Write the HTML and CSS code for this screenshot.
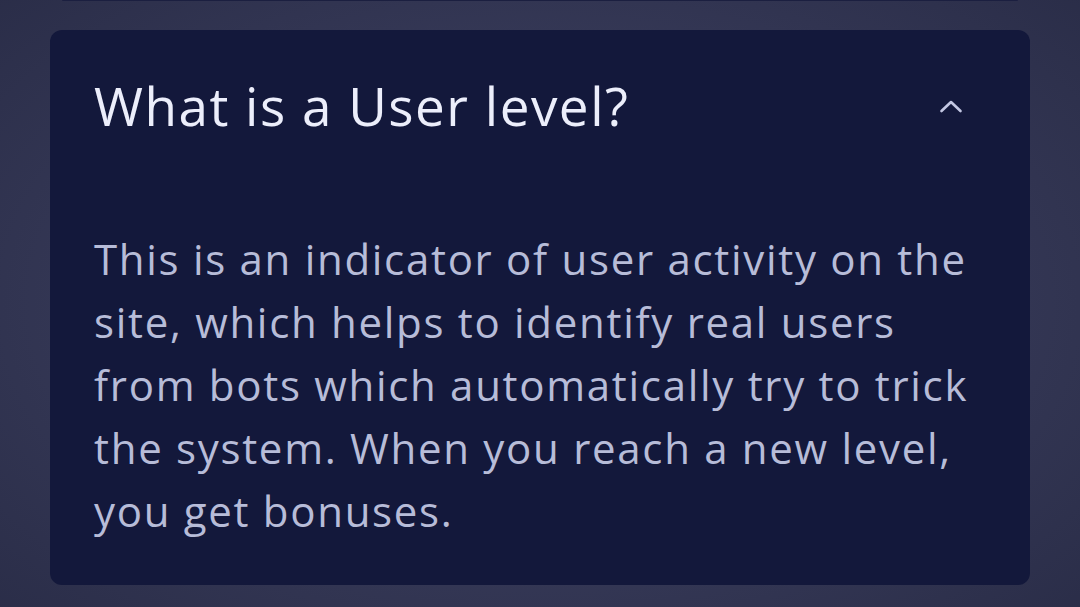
FILE: index.html
```html
<!DOCTYPE html>
<html lang="en">
<head>
<meta charset="utf-8">
<link rel="stylesheet" href="styles.css">
</head>
<body>
<div class="page">
  <div class="prev-card"></div>
  <section class="card">
    <div class="card-head">
      <h2 class="title">What is a User level?</h2>
      <svg class="chevron" width="24" height="14" viewBox="0 0 24 14" aria-hidden="true">
        <polyline points="2.5,12 12,3 21.5,12" fill="none" stroke="#c3c7e3" stroke-width="2.6" stroke-linecap="round" stroke-linejoin="round"/>
      </svg>
    </div>
    <p class="answer">This is an indicator of user activity on the site, which helps to identify real users from bots which automatically try to trick the system. When you reach a new level, you get bonuses.</p>
  </section>
</div>
</body>
</html>
```
FILE: styles.css
```css
html, body {
  margin: 0;
  padding: 0;
}
body {
  width: 1080px;
  height: 607px;
  overflow: hidden;
  background: radial-gradient(ellipse 70% 75% at 50% 50%, #393d5c 0%, #353856 55%, #2a2d48 100%);
  font-family: "Open Sans", "DejaVu Sans", sans-serif;
}
.page {
  padding: 0 50px;
}
.prev-card {
  height: 1px;
  margin: 0 12px;
  background: #1b1f40;
  border-radius: 0 0 6px 6px;
}
.card {
  margin-top: 29px;
  height: 555px;
  box-sizing: border-box;
  background: #13183b;
  border-radius: 12px;
  padding: 44px 67px 43px 44px;
}
.card-head {
  display: flex;
  align-items: center;
  justify-content: space-between;
}
.title {
  margin: 0;
  font-size: 53px;
  line-height: 64px;
  font-weight: 400;
  color: #eceefb;
  letter-spacing: 1.5px;
}
.chevron {
  display: block;
  flex: none;
}
.answer {
  margin: 89px 0 0 0;
  font-size: 42px;
  line-height: 63px;
  color: #b7bcd8;
  letter-spacing: 1.7px;
  width: 900px;
}
```
